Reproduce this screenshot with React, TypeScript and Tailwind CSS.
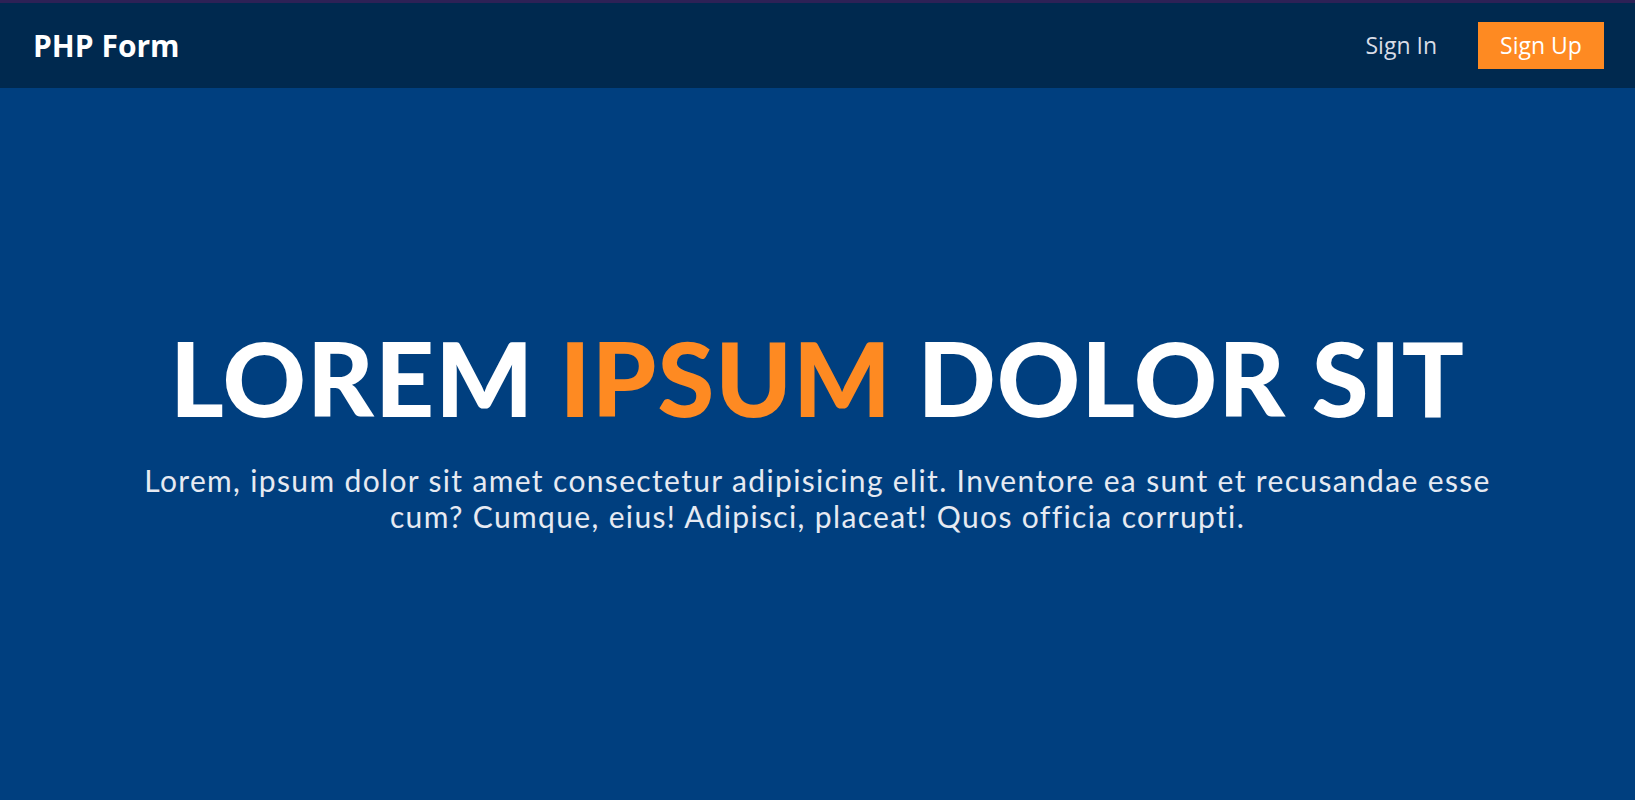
import React from "react";

export default function App() {
  return (
    <div className="w-[1635px] h-[800px] overflow-hidden flex flex-col bg-[#003f7f]" style={{ fontFamily: "Lato, 'Noto Sans', sans-serif" }}>
      <div className="h-[3px] bg-[#2d2156]" />
      <nav className="h-[85px] bg-[#00294f] flex items-center justify-between pl-[33px] pr-[31px]">
        <div className="text-white font-bold text-[30px] leading-none" style={{ fontFamily: "'Open Sans', sans-serif" }}>PHP Form</div>
        <div className="flex items-center gap-[41px]">
          <a className="text-[#d8dce6] text-[23px] leading-none" style={{ fontFamily: "'Open Sans', sans-serif" }}>Sign In</a>
          <a className="bg-[#fe8a22] text-white text-[23px] leading-none w-[126px] h-[47px] flex items-center justify-center" style={{ fontFamily: "'Open Sans', sans-serif" }}>Sign Up</a>
        </div>
      </nav>
      <main className="flex-1 flex flex-col items-center pt-[238px]">
        <h1 className="text-white font-black text-[103px] leading-none tracking-[1px]">
          LOREM <span className="text-[#fe8a22]">IPSUM</span> DOLOR SIT
        </h1>
        <p className="mt-[33px] text-[#e6eaf2] text-[30px] leading-[36px] tracking-[1.35px] text-center w-[1420px]">
          Lorem, ipsum dolor sit amet consectetur adipisicing elit. Inventore ea sunt et recusandae esse cum? Cumque, eius! Adipisci, placeat! Quos officia corrupti.
        </p>
      </main>
    </div>
  );
}
